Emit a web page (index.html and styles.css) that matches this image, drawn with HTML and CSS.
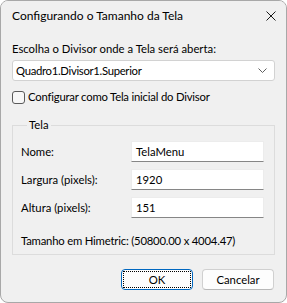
FILE: index.html
```html
<!DOCTYPE html>
<html lang="pt-BR">
<head>
  <meta charset="UTF-8">
  <title>Configurando o Tamanho da Tela</title>
  <link rel="stylesheet" href="styles.css">
</head>
<body>
  <div class="dialog">
    <div class="title-bar">
      <span class="title">Configurando o Tamanho da Tela</span>
      <svg class="close" width="10" height="10" viewBox="0 0 10 10">
        <path d="M0.5 0.5 L9.5 9.5 M9.5 0.5 L0.5 9.5" stroke="#1a1a1a" stroke-width="1" fill="none"/>
      </svg>
    </div>
    <div class="content">
      <label class="caption" for="divisor">Escolha o Divisor onde a Tela será aberta:</label>
      <div class="combo" id="divisor">
        <span class="combo-text">Quadro1.Divisor1.Superior</span>
        <svg width="9" height="5" viewBox="0 0 9 5">
          <path d="M0.5 0.5 L4.5 4.5 L8.5 0.5" stroke="#5f5f5f" stroke-width="1" fill="none"/>
        </svg>
      </div>
      <label class="check">
        <span class="box"></span>
        <span class="check-text">Configurar como Tela inicial do Divisor</span>
      </label>
      <fieldset class="group">
        <legend>Tela</legend>
        <div class="rows">
          <span class="row-label">Nome:</span>
          <div class="field">TelaMenu</div>
          <span class="row-label">Largura (pixels):</span>
          <div class="field">1920</div>
          <span class="row-label">Altura (pixels):</span>
          <div class="field">151</div>
        </div>
        <p class="himetric">Tamanho em Himetric: (50800.00 x 4004.47)</p>
      </fieldset>
      <div class="buttons">
        <button type="button" class="btn default"><span>OK</span></button>
        <button type="button" class="btn">Cancelar</button>
      </div>
    </div>
  </div>
</body>
</html>
```

FILE: styles.css
```css
body {
  margin: 0;
  background: #ffffff;
  font-family: "Lato", "Noto Sans", sans-serif;
  font-size: 11.3px;
  color: #000;
}
.dialog {
  width: 287px;
  height: 303px;
  box-sizing: border-box;
  border: 1px solid #a8a8a8;
  border-radius: 8px;
  background: #f0f0f0;
  overflow: hidden;
}
.title-bar {
  height: 30px;
  display: flex;
  align-items: center;
  justify-content: space-between;
  padding: 0 10px 0 11px;
  background: #f0f0f0;
}
.title {
  font-size: 12px;
  line-height: 16px;
}
.content {
  padding: 10px 11px 0 11px;
}
.caption {
  display: block;
  line-height: 16px;
}
.combo {
  margin-top: 3px;
  height: 21px;
  box-sizing: border-box;
  border: 1px solid #d2d2d2;
  border-radius: 3px;
  background: #fff;
  display: flex;
  align-items: center;
  justify-content: space-between;
  padding: 0 7px 0 3px;
}
.combo-text {
  letter-spacing: -0.3px;
}
.check {
  display: flex;
  align-items: center;
  gap: 3px;
  margin-top: 8px;
  line-height: 16px;
}
.check-text {
  letter-spacing: -0.2px;
}
.box {
  width: 13px;
  height: 13px;
  box-sizing: border-box;
  border: 1px solid #5a5a5a;
  border-radius: 3px;
  background: #f7f7f7;
}
.group {
  margin: 12px 0 0 0;
  border: 1px solid #dcdcdc;
  padding: 8px 10px 0 8px;
  height: 138px;
  box-sizing: border-box;
}
.group legend {
  padding: 0 2px;
  margin-left: 6px;
  line-height: 16px;
}
.rows {
  display: grid;
  grid-template-columns: 110px 1fr;
  row-gap: 7px;
  align-items: center;
}
.field {
  height: 21px;
  box-sizing: border-box;
  background: #fff;
  border: 1px solid #ececec;
  border-bottom-color: #868686;
  padding: 0 4px;
  line-height: 19px;
}
.himetric {
  margin: 15px 0 0 0;
  line-height: 16px;
  white-space: nowrap;
  letter-spacing: -0.2px;
}
.buttons {
  display: flex;
  justify-content: flex-end;
  gap: 9px;
  margin-top: 14px;
  padding-right: 1px;
}
.btn {
  width: 72px;
  height: 21px;
  box-sizing: border-box;
  font: inherit;
  color: #000;
  background: #fdfdfd;
  border: 1px solid #d0d0d0;
  border-bottom-color: #b8b8b8;
  border-radius: 4px;
  padding: 0;
}
.btn.default {
  border: 1px solid #0067c0;
  padding: 1px;
}
.btn.default span {
  display: block;
  height: 100%;
  box-sizing: border-box;
  border: 1px dotted #000;
  line-height: 15px;
}
```
